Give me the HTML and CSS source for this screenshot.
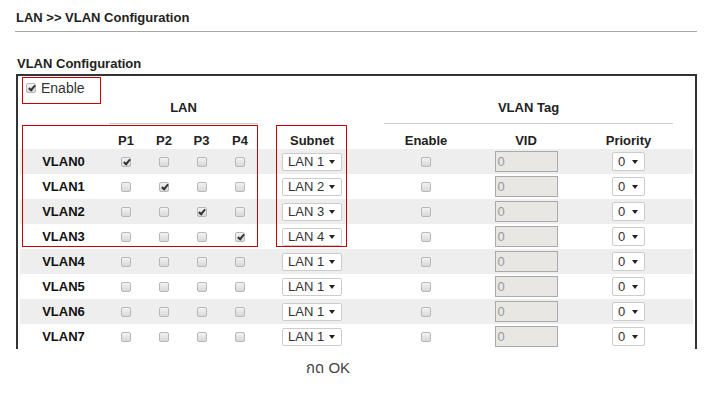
FILE: index.html
```html
<!DOCTYPE html>
<html lang="th">
<head>
    <meta charset="UTF-8">
    <meta name="viewport" content="width=device-width, initial-scale=1.0">
    <title>LAN &gt;&gt; VLAN Configuration</title>
    <link rel="stylesheet" href="styles.css">
</head>
<body>
<div class="page">
    <h1 class="crumb">LAN &gt;&gt; VLAN Configuration</h1>
    <h2 class="section">VLAN Configuration</h2>

    <div class="panel">
        <div class="enable"><span class="cb on"></span>Enable</div>

        <table class="vlan">
            <colgroup>
                <col class="c-name"><col class="c-p1"><col class="c-p2"><col class="c-p3"><col class="c-p4">
                <col class="c-subnet"><col class="c-en"><col class="c-vid"><col class="c-pri">
            </colgroup>
            <tr class="group">
                <th></th>
                <th colspan="4"><div class="grp lan">LAN</div></th>
                <th></th>
                <th colspan="3"><div class="grp tag">VLAN Tag</div></th>
            </tr>
            <tr class="head">
                <th></th><th>P1</th><th>P2</th><th>P3</th><th>P4</th>
                <th>Subnet</th><th>Enable</th><th>VID</th><th>Priority</th>
            </tr>
            <tr class="odd">
                <td class="name">VLAN0</td>
                <td><span class="cb on"></span></td><td><span class="cb"></span></td><td><span class="cb"></span></td><td><span class="cb"></span></td>
                <td><span class="sel">LAN 1</span></td>
                <td><span class="cb"></span></td>
                <td><span class="vid">0</span></td>
                <td><span class="sel pri">0</span></td>
            </tr>
            <tr>
                <td class="name">VLAN1</td>
                <td><span class="cb"></span></td><td><span class="cb on"></span></td><td><span class="cb"></span></td><td><span class="cb"></span></td>
                <td><span class="sel">LAN 2</span></td>
                <td><span class="cb"></span></td>
                <td><span class="vid">0</span></td>
                <td><span class="sel pri">0</span></td>
            </tr>
            <tr class="odd">
                <td class="name">VLAN2</td>
                <td><span class="cb"></span></td><td><span class="cb"></span></td><td><span class="cb on"></span></td><td><span class="cb"></span></td>
                <td><span class="sel">LAN 3</span></td>
                <td><span class="cb"></span></td>
                <td><span class="vid">0</span></td>
                <td><span class="sel pri">0</span></td>
            </tr>
            <tr>
                <td class="name">VLAN3</td>
                <td><span class="cb"></span></td><td><span class="cb"></span></td><td><span class="cb"></span></td><td><span class="cb on"></span></td>
                <td><span class="sel">LAN 4</span></td>
                <td><span class="cb"></span></td>
                <td><span class="vid">0</span></td>
                <td><span class="sel pri">0</span></td>
            </tr>
            <tr class="odd">
                <td class="name">VLAN4</td>
                <td><span class="cb"></span></td><td><span class="cb"></span></td><td><span class="cb"></span></td><td><span class="cb"></span></td>
                <td><span class="sel">LAN 1</span></td>
                <td><span class="cb"></span></td>
                <td><span class="vid">0</span></td>
                <td><span class="sel pri">0</span></td>
            </tr>
            <tr>
                <td class="name">VLAN5</td>
                <td><span class="cb"></span></td><td><span class="cb"></span></td><td><span class="cb"></span></td><td><span class="cb"></span></td>
                <td><span class="sel">LAN 1</span></td>
                <td><span class="cb"></span></td>
                <td><span class="vid">0</span></td>
                <td><span class="sel pri">0</span></td>
            </tr>
            <tr class="odd">
                <td class="name">VLAN6</td>
                <td><span class="cb"></span></td><td><span class="cb"></span></td><td><span class="cb"></span></td><td><span class="cb"></span></td>
                <td><span class="sel">LAN 1</span></td>
                <td><span class="cb"></span></td>
                <td><span class="vid">0</span></td>
                <td><span class="sel pri">0</span></td>
            </tr>
            <tr>
                <td class="name">VLAN7</td>
                <td><span class="cb"></span></td><td><span class="cb"></span></td><td><span class="cb"></span></td><td><span class="cb"></span></td>
                <td><span class="sel">LAN 1</span></td>
                <td><span class="cb"></span></td>
                <td><span class="vid">0</span></td>
                <td><span class="sel pri">0</span></td>
            </tr>
        </table>

        <!-- red marks drawn over the form -->
        <div class="mark mark-enable"></div>
        <div class="mark mark-lan"></div>
        <div class="mark mark-subnet"></div>
    </div>

    <p class="note">กด OK</p>
</div>
</body>
</html>
```

FILE: styles.css
```css
body {
    margin: 0;
    font-family: "Liberation Sans", Arial, "Noto Sans Thai", "DejaVu Sans", sans-serif;
    color: #222;
    background: #fff;
}
.page {
    width: 682px;
    margin-left: 15px;
}
.crumb {
    margin: 0;
    padding: 10px 0 6px 1px;
    font-size: 13px;
    line-height: 15px;
    border-bottom: 1px solid #a8a8a8;
}
.section {
    margin: 24px 0 3px 2px;
    font-size: 13px;
    line-height: 15px;
}
.panel {
    position: relative;
    margin-left: 1px;
    height: 273px;
    overflow: hidden;
    border: 2px solid #333;
    border-bottom: 0;
}
.enable {
    height: 23px;
    display: flex;
    align-items: center;
    gap: 5px;
    padding-left: 8px;
    font-size: 14px;
    color: #333;
}

.vlan {
    border-collapse: collapse;
    table-layout: fixed;
    width: 673px;
    margin-left: 2px;
    font-size: 13px;
}
.vlan th, .vlan td {
    padding: 0;
    text-align: center;
}
.c-name { width: 87px; }
.c-p1, .c-p2 { width: 38px; }
.c-p3 { width: 37px; }
.c-p4 { width: 40px; }
.c-subnet { width: 104px; }
.c-en { width: 124px; }
.c-vid { width: 76px; }
.c-pri { width: 129px; }

.group th {
    height: 25px;
    vertical-align: top;
}
.grp {
    line-height: 16px;
    padding: 1px 0 7px;
    border-bottom: 1px solid #ccc;
}
.lan { margin: 0 2px; }
.tag { margin: 0 20px; }

.head { height: 26px; }
.head th {
    vertical-align: bottom;
    padding-bottom: 1px;
    line-height: 15px;
}

.vlan tr { height: 25px; }
.vlan tr.odd td { background: #eee; }
.vlan td { vertical-align: middle; }
.name {
    font-weight: bold;
    color: #111;
    padding-top: 1px;
}

.cb {
    display: inline-block;
    position: relative;
    box-sizing: border-box;
    width: 10px;
    height: 10px;
    border: 1px solid #b8b8b8;
    border-radius: 2px;
    background: linear-gradient(#f3f3f3, #d8d8d8);
    vertical-align: middle;
}
.vlan .cb {
    display: block;
    margin: 0 auto;
}
.cb.on::after {
    content: "";
    position: absolute;
    left: 2.5px;
    top: 0;
    width: 2px;
    height: 5px;
    border-right: 2px solid #333;
    border-bottom: 2px solid #333;
    transform: rotate(40deg);
}

.sel {
    display: inline-flex;
    align-items: center;
    justify-content: space-between;
    box-sizing: border-box;
    width: 60px;
    height: 18px;
    padding: 0 6px 0 5px;
    border: 1px solid #ccc;
    border-radius: 2px;
    background: #fff;
    color: #333;
    vertical-align: middle;
}
.sel::after {
    content: "";
    border-left: 3px solid transparent;
    border-right: 3px solid transparent;
    border-top: 4px solid #222;
}
.sel.pri {
    width: 33px;
    height: 19px;
}
.vid {
    display: inline-block;
    box-sizing: border-box;
    width: 63px;
    height: 21px;
    padding-left: 2px;
    border: 1px solid #aaa;
    background: #e8e7e3;
    color: #9a9a9a;
    line-height: 19px;
    text-align: left;
    vertical-align: middle;
}

.mark {
    position: absolute;
    box-sizing: border-box;
    border: 1px solid #c40000;
}
.mark-enable { left: 4px; top: 1px; width: 79px; height: 27px; }
.mark-lan { left: 4px; top: 49px; width: 236px; height: 122px; }
.mark-subnet { left: 258px; top: 49px; width: 71px; height: 122px; }

.note {
    margin: 10px 0 0;
    padding-left: 291px;
    font-size: 15px;
    line-height: 18px;
    color: #444;
}
```
